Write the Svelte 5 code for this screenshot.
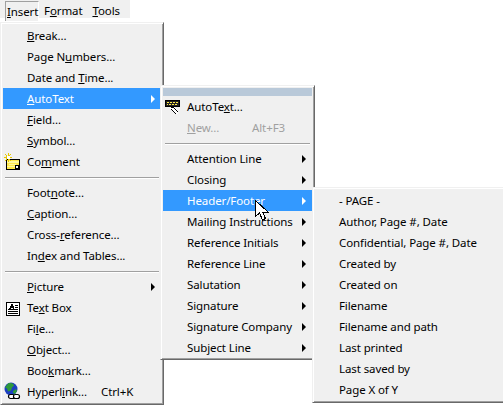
<script>
	const insertMenu = [
		{ pre: '', u: 'B', post: 'reak...' },
		{ pre: 'Page N', u: 'u', post: 'mbers...' },
		{ pre: 'Date and ', u: 'T', post: 'ime...' },
		{ pre: '', u: 'A', post: 'utoText', sub: true, active: true },
		{ pre: '', u: 'F', post: 'ield...' },
		{ pre: '', u: 'S', post: 'ymbol...' },
		{ pre: 'Co', u: 'm', post: 'ment', icon: 'comment' },
		{ sep: true },
		{ pre: 'Foot', u: 'n', post: 'ote...' },
		{ pre: '', u: 'C', post: 'aption...' },
		{ pre: 'Cross-', u: 'r', post: 'eference...' },
		{ pre: 'In', u: 'd', post: 'ex and Tables...' },
		{ sep: true },
		{ pre: '', u: 'P', post: 'icture', sub: true },
		{ pre: 'Te', u: 'x', post: 't Box', icon: 'textbox' },
		{ pre: 'Fi', u: 'l', post: 'e...' },
		{ pre: '', u: 'O', post: 'bject...' },
		{ pre: 'Boo', u: 'k', post: 'mark...' },
		{ pre: 'Hyperl', u: 'i', post: 'nk...', icon: 'globe', key: 'Ctrl+K' }
	];

	const autoTextMenu = [
		{ pre: 'AutoTe', u: 'x', post: 't...', icon: 'keyboard' },
		{ pre: '', u: 'N', post: 'ew...', key: 'Alt+F3', disabled: true },
		{ sep: true },
		{ pre: 'Attention Line', sub: true },
		{ pre: 'Closing', sub: true },
		{ pre: 'Header/Footer', sub: true, active: true },
		{ pre: 'Mailing Instructions', sub: true },
		{ pre: 'Reference Initials', sub: true },
		{ pre: 'Reference Line', sub: true },
		{ pre: 'Salutation', sub: true },
		{ pre: 'Signature', sub: true },
		{ pre: 'Signature Company', sub: true },
		{ pre: 'Subject Line', sub: true }
	];

	const headerFooterMenu = [
		'- PAGE -',
		'Author, Page #, Date',
		'Confidential, Page #, Date',
		'Created by',
		'Created on',
		'Filename',
		'Filename and path',
		'Last printed',
		'Last saved by',
		'Page X of Y'
	].map((pre) => ({ pre }));
</script>

{#snippet icon(name)}
	{#if name === 'comment'}
		<svg width="17" height="18" viewBox="0 0 17 18" shape-rendering="crispEdges">
			<rect x="3.5" y="6.5" width="13" height="10" fill="#ffe94a" stroke="#000" />
			<path d="M4 8h12v2H4zM6 11h7v1H6zM4 13h8v1H4z" fill="#fff8a0" />
			<rect x="12" y="12" width="3" height="3" fill="#fff" stroke="#000" />
			<path d="M5 0v9M1 4.5h8M2 1l6 7M8 1L2 8" stroke="#e8c800" fill="none" />
			<rect x="4" y="3" width="3" height="3" fill="#fff" />
		</svg>
	{:else if name === 'textbox'}
		<svg width="17" height="17" viewBox="0 0 17 17" shape-rendering="crispEdges">
			<rect x="3.5" y="3.5" width="13" height="13" fill="#fff" stroke="#000" />
			<path d="M6 9h1V7h1V5h1v2h1v2h1M7 8h3" stroke="#000" fill="none" />
			<path d="M5 10.5h10M5 12.5h10M5 14.5h10M12 6.5h3M12 8.5h3" stroke="#000" fill="none" />
		</svg>
	{:else if name === 'globe'}
		<svg width="18" height="19" viewBox="0 0 18 19">
			<circle cx="8" cy="7" r="6.5" fill="#1c3fc0" />
			<path d="M5 1.5c3-1 6 0 6 2l-2 2-1 3-3 1-1-3-2-1zM10 9l3-2 1 2-2 3-2-1z" fill="#2f9a3a" />
			<g fill="#fff" stroke="#000" stroke-width="1.2">
				<rect x="5.5" y="12.5" width="6" height="4" rx="2" />
				<rect x="10.5" y="12.5" width="6" height="4" rx="2" />
			</g>
		</svg>
	{:else if name === 'keyboard'}
		<svg width="18" height="17" viewBox="0 0 18 17" shape-rendering="crispEdges">
			<rect x="2.5" y="2.5" width="14" height="6" fill="#222" stroke="#000" />
			<path d="M4 4h2v1H4zM7 4h2v1H7zM10 4h2v1h-2zM13 4h2v1h-2zM4 6h1v1H4zM6 6h2v1H6zM9 6h2v1H9zM12 6h2v1h-2z" fill="#ffe94a" />
			<path d="M7 9h4l4 4v3h-3L7 11z" fill="#fff" />
			<path d="M8 9h3M11 10l4 4M8 11l5 5" stroke="#000" fill="none" />
		</svg>
	{/if}
{/snippet}

{#snippet rows(items)}
	{#each items as item}
		{#if item.sep}
			<div class="sep"></div>
		{:else}
			<div class="row" class:active={item.active} class:disabled={item.disabled}>
				<span class="slot">
					{#if item.icon}{@render icon(item.icon)}{/if}
				</span>
				<span class="label">{item.pre}{#if item.u}<u>{item.u}</u>{item.post}{/if}</span>
				{#if item.key}<span class="key">{item.key}</span>{/if}
				{#if item.sub}<span class="arrow"></span>{/if}
			</div>
		{/if}
	{/each}
{/snippet}

<div class="screen">
	<div class="menubar">
		<span class="top open"><u>I</u>nsert</span>
		<span class="top">F<u>o</u>rmat</span>
		<span class="top"><u>T</u>ools</span>
	</div>

	<div class="menu insert">{@render rows(insertMenu)}</div>

	<div class="menu autotext">
		<div class="strip"></div>
		{@render rows(autoTextMenu)}
	</div>

	<div class="menu headerfooter">{@render rows(headerFooterMenu)}</div>

	<svg class="cursor" width="14" height="21" viewBox="0 0 14 21" shape-rendering="crispEdges">
		<path d="M0.5 0.5v16l4-3.5 3 7 3-1.5-3-6.5h5.5z" fill="#fff" stroke="#000" />
	</svg>
</div>

<style>
	:global(body) {
		background: #fff;
	}

	.screen {
		position: relative;
		width: 503px;
		height: 406px;
		overflow: hidden;
		background: #fff;
		font-family: 'Noto Sans', sans-serif;
		font-size: 11.5px;
		letter-spacing: -0.1px;
		color: #000;
	}

	.menubar {
		display: flex;
		align-items: flex-start;
		width: 130px;
		height: 18px;
		padding-left: 5px;
		box-sizing: border-box;
		background: #f0f0f0;
	}

	.top {
		height: 20px;
		margin-top: 1px;
		padding: 0 5px;
		line-height: 20px;
		box-sizing: border-box;
	}

	.top.open {
		position: relative;
		z-index: 1;
		width: 34px;
		padding: 0 0 0 1px;
		background: #f0f0f0;
		border-top: 1px solid #a0a0a0;
		border-left: 1px solid #a0a0a0;
		border-right: 1px solid #fff;
		line-height: 19px;
	}

	.menu {
		position: absolute;
		box-sizing: border-box;
		background: #f0f0f0;
		border: 1px solid;
		border-color: #f0f0f0 #696969 #696969 #f0f0f0;
		box-shadow: inset 1px 1px 0 #fff, inset -1px -1px 0 #a0a0a0;
		padding: 2px;
	}

	.insert {
		left: 0;
		top: 22px;
		width: 164px;
		height: 383px;
	}

	.autotext {
		left: 160px;
		top: 85px;
		width: 155px;
		height: 275px;
	}

	.headerfooter {
		left: 312px;
		top: 187px;
		width: 200px;
		height: 216px;
	}

	.strip {
		height: 8px;
		background: #b9c9d9;
	}

	.row {
		display: flex;
		align-items: center;
		height: 21px;
		white-space: nowrap;
	}

	.slot {
		display: flex;
		align-items: center;
		width: 24px;
		height: 21px;
		flex: none;
	}

	.label {
		flex: 1;
	}

	.key {
		flex: none;
		width: 60px;
	}

	.arrow {
		flex: none;
		width: 0;
		height: 0;
		margin-right: 6px;
		border-left: 4px solid #000;
		border-top: 4px solid transparent;
		border-bottom: 4px solid transparent;
	}

	.active {
		background: #3399ff;
		color: #fff;
	}

	.active .arrow {
		border-left-color: #fff;
	}

	.disabled {
		color: #a0a0a0;
	}

	.sep {
		height: 2px;
		margin: 5px 2px 3px;
		background: #a0a0a0;
		border-bottom: 1px solid #fff;
		box-sizing: border-box;
	}

	.cursor {
		position: absolute;
		left: 255px;
		top: 200px;
	}
</style>
